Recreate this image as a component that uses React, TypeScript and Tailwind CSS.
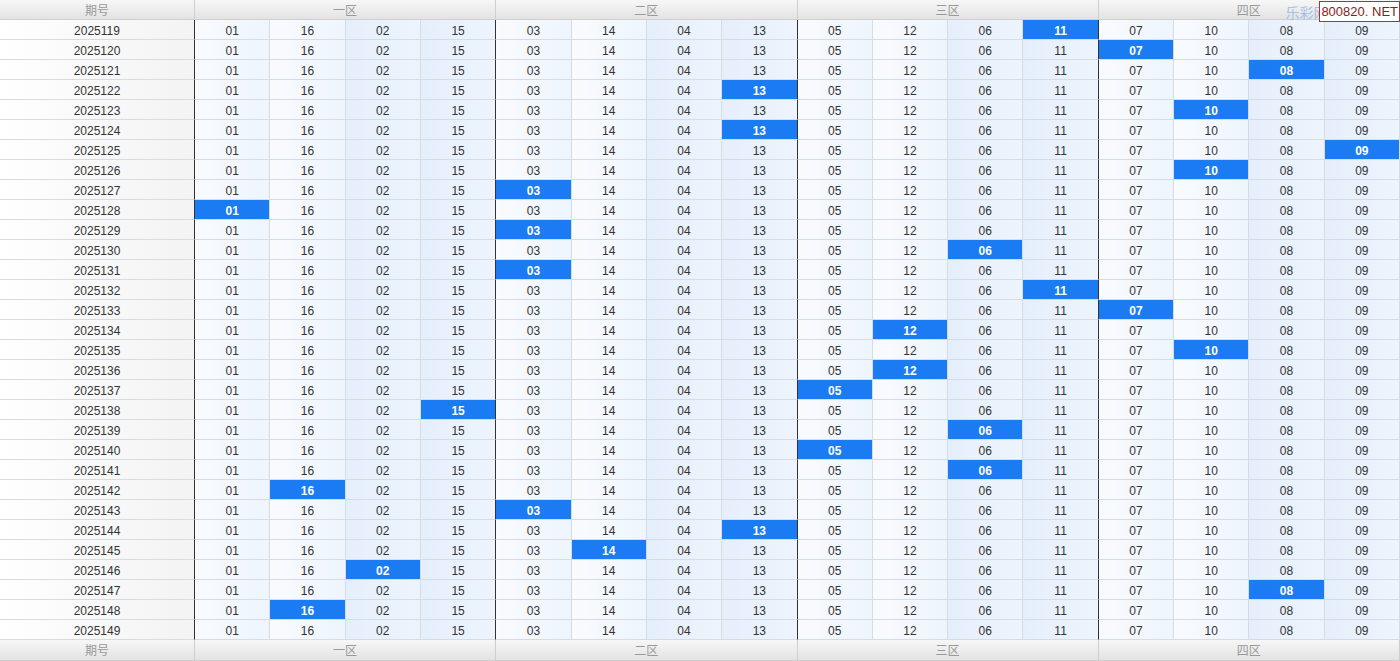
import React from 'react';

const zones = [
  { name: '一区', nums: ['01', '16', '02', '15'] },
  { name: '二区', nums: ['03', '14', '04', '13'] },
  { name: '三区', nums: ['05', '12', '06', '11'] },
  { name: '四区', nums: ['07', '10', '08', '09'] },
];

// highlighted column index per row, -1 = none
const hits = [
  11, 12, 14, 7, 13, 7, 15, 13, 4, 0, 4, 10, 4, 11, 12, 9, 13, 9, 8, 3, 10, 8, 10, 1, 4, 7, 5, 2, 14, 1, -1,
];

const cols = zones.flatMap(z => z.nums);

const HeaderRow = ({ tall }: { tall?: boolean }) => (
  <div
    className={`grid grid-cols-[195px_repeat(4,minmax(0,1fr))] ${tall ? 'h-[21px]' : 'h-5'} bg-gradient-to-b from-[#f7f7f7] to-[#e2e2e2] text-[12px] text-[#999] leading-[16px]`}
  >
    <div className="text-center pt-[3px] border-r border-b border-[#cfcfcf]">期号</div>
    {zones.map(z => (
      <div key={z.name} className="text-center pt-[3px] border-r border-b border-[#cfcfcf]">{z.name}</div>
    ))}
  </div>
);

export default function App() {
  return (
    <div className="relative w-[1400px] h-[661px] overflow-hidden bg-white font-['Liberation_Sans','Noto_Sans_CJK_SC',sans-serif]">
      <HeaderRow />
      {hits.map((hit, r) => (
        <div key={r} className="grid grid-cols-[195px_repeat(16,minmax(0,1fr))] h-5 text-[12px] text-[#333] leading-[16px]">
          <div className="h-5 text-center pt-[3px] bg-gradient-to-r from-white to-[#f3f3f3] border-b border-b-[#d5dce4] border-r border-r-[#333]">
            {2025119 + r}
          </div>
          {cols.map((n, c) => {
            const pos = c % 4;
            const zoneEnd = pos === 3 && c !== 15;
            const bg =
              pos < 2
                ? 'bg-gradient-to-r from-[#f9fbfe] to-[#eef5fd]'
                : 'bg-gradient-to-r from-[#e5effb] to-[#edf4fd]';
            return (
              <div
                key={c}
                className={`h-5 text-center pt-[3px] border-b border-b-[#d5dce4] border-r ${zoneEnd ? 'border-r-[#333]' : 'border-r-[#d5dce4]'} ${
                  hit === c ? 'bg-[#1a7bf2] text-white font-bold' : bg
                }`}
              >
                {n}
              </div>
            );
          })}
        </div>
      ))}
      <HeaderRow tall />
      <div className="absolute top-0 right-0 flex items-center h-[22px]">
        <span className="text-[14px] text-[#9ec0e6] mr-[-8px] pt-[2px] font-['Noto_Sans_CJK_SC',sans-serif]">乐彩网</span>
        <span className="relative bg-white border border-[#a33] text-[#8b1a1a] text-[13px] leading-[19px] px-[1px] h-[21px] mt-[1px] whitespace-pre font-['Liberation_Sans',sans-serif]">
          800820. NET
        </span>
      </div>
    </div>
  );
}
